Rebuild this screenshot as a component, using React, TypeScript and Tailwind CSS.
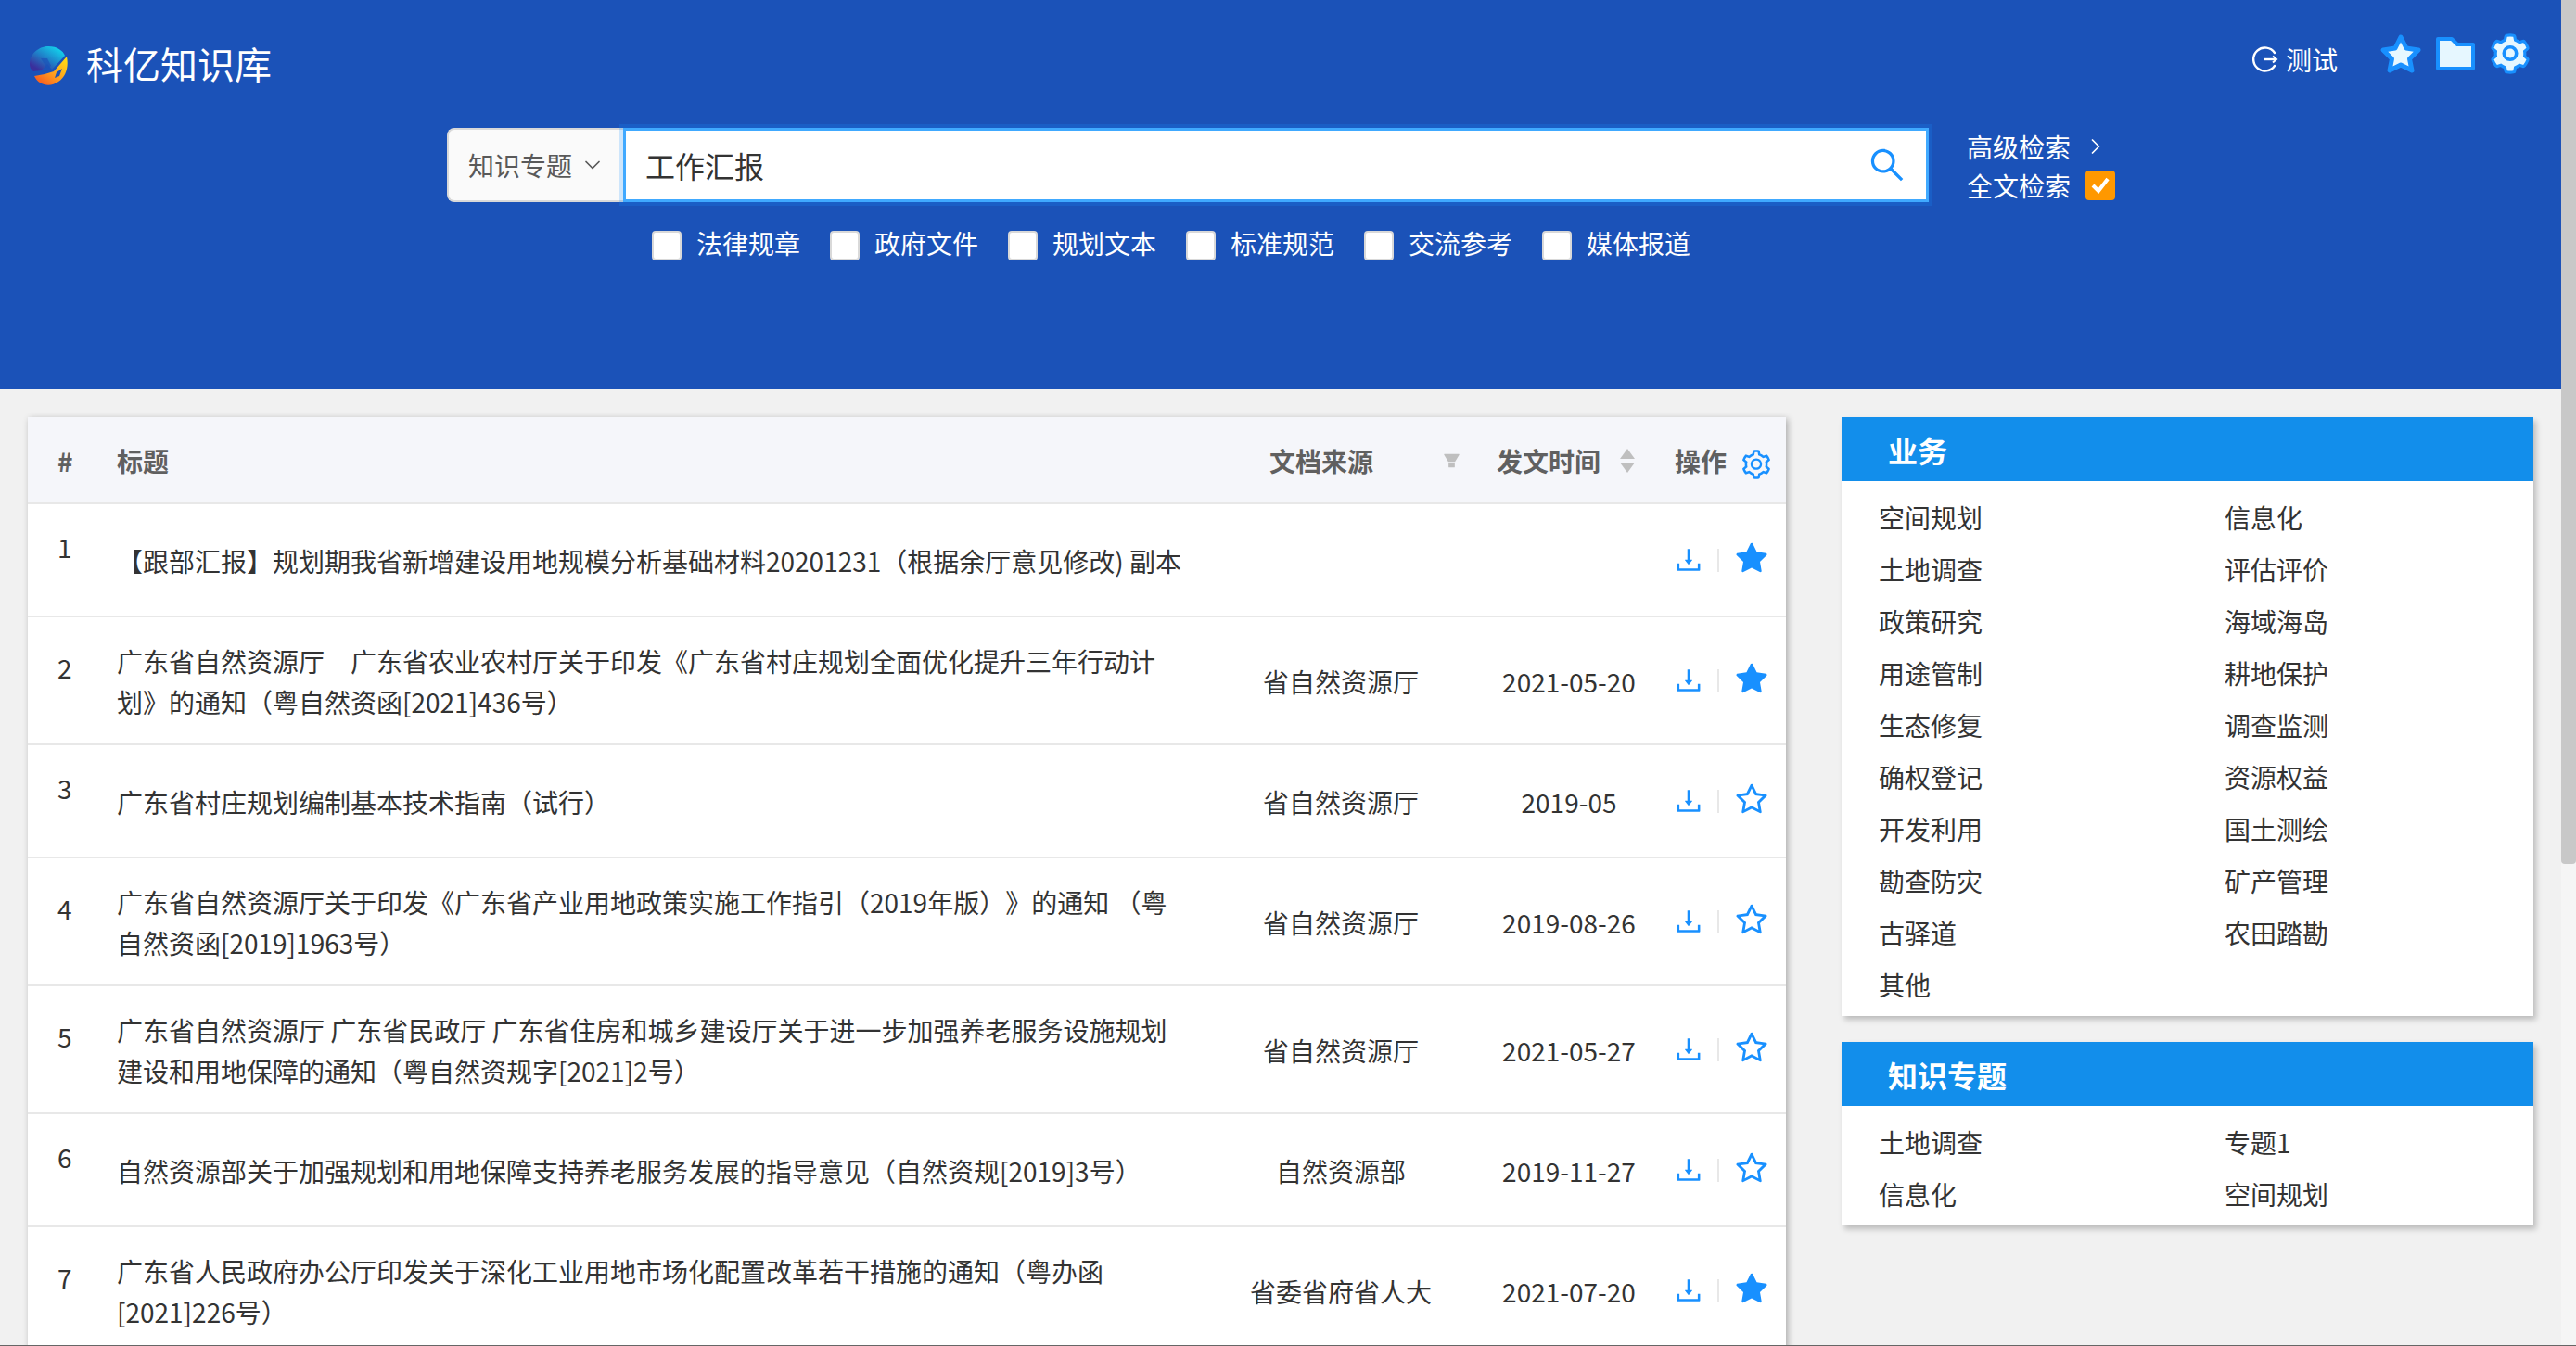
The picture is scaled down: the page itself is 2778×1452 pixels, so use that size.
import React from 'react';
import { AiFillFilter, AiFillStar, AiOutlineDownload, AiOutlineSearch, AiOutlineSetting, AiOutlineStar } from 'react-icons/ai';
import { ChevronDown, ChevronRight } from 'lucide-react';

const rows = [
  { lines: ['【跟部汇报】规划期我省新增建设用地规模分析基础材料20201231（根据余厅意见修改) 副本'], source: '', date: '', starred: true },
  { lines: ['广东省自然资源厅　广东省农业农村厅关于印发《广东省村庄规划全面优化提升三年行动计', '划》的通知（粤自然资函[2021]436号）'], source: '省自然资源厅', date: '2021-05-20', starred: true },
  { lines: ['广东省村庄规划编制基本技术指南（试行）'], source: '省自然资源厅', date: '2019-05', starred: false },
  { lines: ['广东省自然资源厅关于印发《广东省产业用地政策实施工作指引（2019年版）》的通知 （粤', '自然资函[2019]1963号）'], source: '省自然资源厅', date: '2019-08-26', starred: false },
  { lines: ['广东省自然资源厅 广东省民政厅 广东省住房和城乡建设厅关于进一步加强养老服务设施规划', '建设和用地保障的通知（粤自然资规字[2021]2号）'], source: '省自然资源厅', date: '2021-05-27', starred: false },
  { lines: ['自然资源部关于加强规划和用地保障支持养老服务发展的指导意见（自然资规[2019]3号）'], source: '自然资源部', date: '2019-11-27', starred: false },
  { lines: ['广东省人民政府办公厅印发关于深化工业用地市场化配置改革若干措施的通知（粤办函', '[2021]226号）'], source: '省委省府省人大', date: '2021-07-20', starred: true },
];

const business = ['空间规划', '信息化', '土地调查', '评估评价', '政策研究', '海域海岛', '用途管制', '耕地保护', '生态修复', '调查监测', '确权登记', '资源权益', '开发利用', '国土测绘', '勘查防灾', '矿产管理', '古驿道', '农田踏勘', '其他'];
const topics = ['土地调查', '专题1', '信息化', '空间规划'];
const categories = ['法律规章', '政府文件', '规划文本', '标准规范', '交流参考', '媒体报道'];

function Logo() {
  return (
    <svg width="43" height="44" viewBox="0 0 43 44" className="shrink-0">
      <defs>
        <linearGradient id="logoTop" x1="0.8" y1="0" x2="0.1" y2="0.8">
          <stop offset="0" stopColor="#12d8ee" />
          <stop offset="0.55" stopColor="#1f7fc8" />
          <stop offset="1" stopColor="#3a2f9c" />
        </linearGradient>
        <linearGradient id="logoBottom" x1="0.9" y1="0.1" x2="0.2" y2="0.9">
          <stop offset="0" stopColor="#ffd916" />
          <stop offset="0.6" stopColor="#ff9a1f" />
          <stop offset="1" stopColor="#f9641f" />
        </linearGradient>
      </defs>
      <path d="M21 1C31 1 37 6 39 11L25 26L20 20L14 27L5 28C2 26 1 23 1 20C1 10 10 1 21 1Z" fill="url(#logoTop)" />
      <path d="M41 12C43 22 41 33 32 39C24 45 11 44 6 33L17 31L27 28L41 12Z" fill="url(#logoBottom)" />
      <path d="M30 29L36 25L33 33L28 35Z" fill="#1b52b8" />
      <path d="M13 14L20 14L24 22L20 25Z" fill="#1b52b8" opacity="0.7" />
    </svg>
  );
}

function TopGear() {
  return (
    <svg width="46" height="46" viewBox="0 0 1024 1024" className="shrink-0">
      <path
        d="M924.8 625.7l-65.5-56c3.1-19 4.7-38.4 4.7-57.8s-1.6-38.8-4.7-57.8l65.5-56a32.03 32.03 0 0 0 9.3-35.2l-.9-2.6a443.74 443.74 0 0 0-79.7-137.9l-1.8-2.1a32.12 32.12 0 0 0-35.1-9.5l-81.3 28.9c-30-24.6-63.5-44-99.7-57.6l-15.7-85a32.05 32.05 0 0 0-25.8-25.7l-2.7-.5c-52.1-9.4-106.9-9.4-159 0l-2.7.5a32.05 32.05 0 0 0-25.8 25.7l-15.8 85.4a351.86 351.86 0 0 0-99 57.4l-81.9-29.1a32 32 0 0 0-35.1 9.5l-1.8 2.1a446.02 446.02 0 0 0-79.7 137.9l-.9 2.6c-4.5 12.5-.8 26.5 9.3 35.2l66.3 56.6c-3.1 18.8-4.6 38-4.6 57.1 0 19.2 1.5 38.4 4.6 57.1L99 625.5a32.03 32.03 0 0 0-9.3 35.2l.9 2.6c18.1 50.4 44.9 96.9 79.7 137.9l1.8 2.1a32.12 32.12 0 0 0 35.1 9.5l81.9-29.1c29.8 24.5 63.1 43.9 99 57.4l15.8 85.4a32.05 32.05 0 0 0 25.8 25.7l2.7.5a449.4 449.4 0 0 0 159 0l2.7-.5a32.05 32.05 0 0 0 25.8-25.7l15.7-85a350 350 0 0 0 99.7-57.6l81.3 28.9a32 32 0 0 0 35.1-9.5l1.8-2.1c34.8-41.1 61.6-87.5 79.7-137.9l.9-2.6c4.5-12.3.8-26.3-9.3-35z"
        fill="#e6f7ff"
        stroke="#1890ff"
        strokeWidth="70"
      />
      <circle cx="512" cy="502" r="150" fill="#e6f7ff" stroke="#1890ff" strokeWidth="80" />
    </svg>
  );
}

function TopStar() {
  return (
    <svg width="46" height="44" viewBox="0 0 46 44" className="shrink-0">
      <path d="M23 4L29 16L42 18L32.5 27.5L35 40L23 34L11 40L13.5 27.5L4 18L17 16Z" fill="#e6f7ff" stroke="#1890ff" strokeWidth="5" strokeLinejoin="round" />
    </svg>
  );
}

function TopFolder() {
  return (
    <svg width="42" height="36" viewBox="0 0 42 36" className="shrink-0">
      <path d="M2 2H17L23 8H40V34H2Z" fill="#e6f7ff" stroke="#1890ff" strokeWidth="4" strokeLinejoin="round" />
    </svg>
  );
}

function LogoutIcon() {
  return (
    <svg width="28" height="28" viewBox="0 0 28 28" fill="none" stroke="white" strokeWidth="2.4" className="shrink-0">
      <path d="M24 7A12.5 12.5 0 1 0 24 21" strokeLinecap="round" />
      <path d="M13 14H26" />
      <path d="M22 10.5L26 14L22 17.5" strokeWidth="2" />
    </svg>
  );
}

function SortIcon() {
  return (
    <svg width="16" height="26" viewBox="0 0 16 26" className="shrink-0">
      <path d="M8 0L16 11H0Z" fill="#bfbfbf" />
      <path d="M8 26L16 15H0Z" fill="#bfbfbf" />
    </svg>
  );
}

function Panel({ title, items }: { title: string; items: string[] }) {
  return (
    <div className="bg-white shadow-[3px_4px_6px_rgba(0,0,0,0.22)]">
      <div className="h-[69px] bg-[#128eeb] pl-[50px] flex items-center text-[32px] font-bold text-white leading-none">{title}</div>
      <div className="grid grid-cols-[373px_1fr] pl-[40px] pt-[11px] pb-[6px]">
        {items.map((item) => (
          <div key={item} className="h-14 flex items-center text-[28px] text-[#333]">{item}</div>
        ))}
      </div>
    </div>
  );
}

export default function App() {
  return (
    <div className="h-screen overflow-hidden flex bg-[#f1f1f1] border-b border-[#666] [text-spacing-trim:space-all] font-['Noto_Sans_CJK_SC','Noto_Sans',sans-serif]">
      <div className="w-[2762px] shrink-0">
        <header className="h-[420px] bg-[#1b52b8] text-white">
          <div className="h-[138px] flex justify-between pl-[31px] pr-[32px]">
            <div className="flex items-center gap-[19px] h-[142px]">
              <Logo />
              <div className="text-[40px] leading-none -mt-[6px]">科亿知识库</div>
            </div>
            <div className="flex items-center h-[128px]">
              <LogoutIcon />
              <span className="ml-[8px] text-[28px]">测试</span>
              <div className="ml-[45px] flex items-center gap-[15px] -mt-[12px]">
                <TopStar />
                <TopFolder />
                <TopGear />
              </div>
            </div>
          </div>
          <div className="flex pl-[482px]">
            <div className="w-[190px] h-20 bg-[#fafafa] border-2 border-r-0 border-[#d9d9d9] rounded-l-lg pl-[21px] flex items-center text-[28px] text-[#595959]">
              知识专题
              <ChevronDown className="ml-[8px] w-[28px] h-[28px]" strokeWidth={1.5} />
            </div>
            <div className="w-[1408px] h-20 bg-white border-[3px] border-[#40a9ff] shadow-[0_0_0_4px_rgba(24,144,255,0.2)] pl-[21px] pr-[20px] flex items-center justify-between">
              <input readOnly value="工作汇报" className="w-[1200px] text-[32px] text-[#333] outline-none bg-transparent" />
              <AiOutlineSearch className="w-[44px] h-[44px] text-[#1890ff]" />
            </div>
            <div className="ml-[41px] text-[28px] leading-[42px] -mt-[1px]">
              <div className="flex items-center">
                高级检索
                <ChevronRight className="ml-[13px] w-[28px] h-[28px]" strokeWidth={1.5} />
              </div>
              <div className="flex items-center">
                全文检索
                <span className="ml-[16px] w-8 h-8 rounded-[4px] bg-[#ff9800] flex items-center justify-center">
                  <svg width="20" height="18" viewBox="0 0 20 18" fill="none" stroke="white" strokeWidth="4">
                    <path d="M2 9L8 15L18 2" />
                  </svg>
                </span>
              </div>
            </div>
          </div>
          <div className="flex pl-[703px] mt-[28px]">
            {categories.map((c) => (
              <div key={c} className="flex items-center w-[192px] text-[28px] leading-8">
                <span className="w-8 h-8 bg-white border-2 border-[#d9d9d9] rounded-[4px] shrink-0" />
                <span className="ml-[16px] -mt-[6px]">{c}</span>
              </div>
            ))}
          </div>
        </header>
        <main className="flex items-start pt-[30px] pl-[30px]">
          <section className="w-[1896px] shrink-0 bg-white shadow-[2px_2px_7px_rgba(0,0,0,0.3)]">
            <div className="flex h-[94px] items-center pt-[2px] bg-[#f5f6fa] border-b-2 border-[#e8e8e8] text-[28px] font-bold text-[#606060] whitespace-nowrap">
              <div className="w-24 pl-8 shrink-0">#</div>
              <div className="w-[1190px] shrink-0">标题</div>
              <div className="w-[260px] shrink-0 flex items-center pl-[53px]">
                文档来源
                <AiFillFilter className="ml-[74px] w-[30px] h-[30px] text-[#bfbfbf]" />
              </div>
              <div className="w-[232px] shrink-0 flex items-center pl-[38px]">
                发文时间
                <span className="ml-[21px]"><SortIcon /></span>
              </div>
              <div className="flex items-center -ml-[2px]">
                操作
                <AiOutlineSetting className="ml-[14px] mt-[8px] w-[36px] h-[36px] text-[#1890ff]" />
              </div>
            </div>
            {rows.map((row, i) => (
              <div key={i} className={`flex items-center border-b-2 border-[#e8e8e8] text-[28px] text-[#333] ${row.lines.length > 1 ? 'h-[138px]' : 'h-[122px]'}`}>
                <div className="w-24 pl-8 shrink-0 pb-7">{i + 1}</div>
                <div className="w-[1190px] shrink-0 leading-[44px] whitespace-nowrap pt-[2px]">
                  {row.lines.map((line) => (
                    <div key={line}>{line}</div>
                  ))}
                </div>
                <div className="w-[260px] shrink-0 text-center pt-[2px]">{row.source}</div>
                <div className="w-[232px] shrink-0 text-center pt-[2px]">{row.date}</div>
                <div className="flex items-center">
                  <AiOutlineDownload className="w-[34px] h-[34px] text-[#1890ff] -ml-[4px]" />
                  <span className="ml-[14px] w-[2px] h-[25px] bg-[#e8e8e8]" />
                  <span className="ml-[15px] -mt-[2px] text-[#1890ff]">
                    {row.starred ? <AiFillStar className="w-[40px] h-[40px]" /> : <AiOutlineStar className="w-[40px] h-[40px]" />}
                  </span>
                </div>
              </div>
            ))}
          </section>
          <aside className="ml-[60px] w-[746px] shrink-0 flex flex-col gap-7">
            <Panel title="业务" items={business} />
            <Panel title="知识专题" items={topics} />
          </aside>
        </main>
      </div>
      <div className="w-4 shrink-0 bg-[#f5f5f5]">
        <div className="h-[932px] bg-[#c8c8c8] rounded-b-[4px]" />
      </div>
    </div>
  );
}
